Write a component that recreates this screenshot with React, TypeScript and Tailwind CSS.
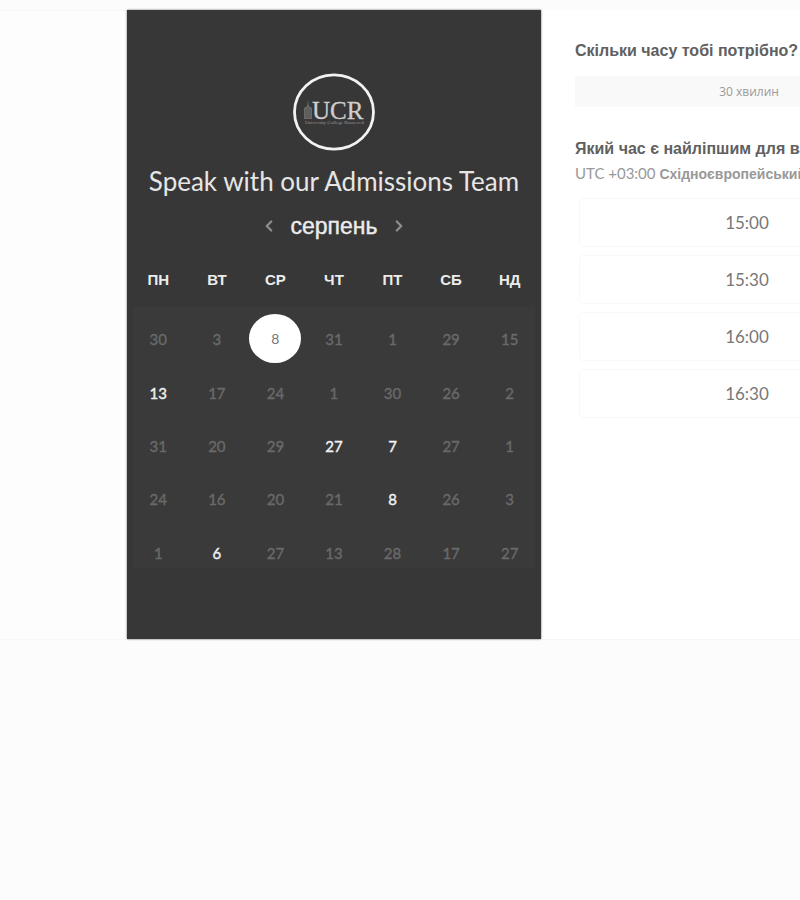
import { ChevronLeft, ChevronRight } from "lucide-react";

const weekdays = ["ПН", "ВТ", "СР", "ЧТ", "ПТ", "СБ", "НД"];

const weeks = [
  [30, 3, 8, 31, 1, 29, 15],
  [13, 17, 24, 1, 30, 26, 2],
  [31, 20, 29, 27, 7, 27, 1],
  [24, 16, 20, 21, 8, 26, 3],
  [1, 6, 27, 13, 28, 17, 27],
];

const selected = "0-2";
const available = ["1-0", "2-3", "2-4", "3-4", "4-1"];
const times = ["15:00", "15:30", "16:00", "16:30"];

function rowHeight(row: number) {
  if (row === 0) return "h-[59px]";
  if (row === weeks.length - 1) return "h-[43px]";
  return "h-[53px]";
}

function cellPadding(row: number) {
  if (row === 0) return "p-0 pt-1 text-center";
  if (row === weeks.length - 1) return "p-0 pt-3 text-center";
  return "p-0 text-center";
}

function Logo() {
  return (
    <svg
      width="82"
      height="78"
      viewBox="0 0 82 78"
      role="img"
      aria-label="UCR University College Roosevelt"
    >
      <ellipse cx="41" cy="39" rx="39.5" ry="37.2" fill="none" stroke="#f2f2f2" strokeWidth="2.8" />
      <path d="M11 46V35l3-2 1-6 1 6 3 2v11z" fill="#696969" />
      <path d="M13 36v9M15 34v11M17 36v9" stroke="#484848" strokeWidth="0.6" />
      <g fontFamily="'Liberation Serif', serif">
        <text x="19" y="46" fontSize="25" fill="#cfcfcf" stroke="#cfcfcf" strokeWidth="0.3">
          UCR
        </text>
        <text x="12" y="51" fontSize="5" fill="#999999">
          University College Roosevelt
        </text>
      </g>
    </svg>
  );
}

function Calendar() {
  return (
    <section className="flex w-[414px] shrink-0 flex-col items-center bg-[#373737] pt-[63px] pb-[71px] shadow-[0_0_2px_rgba(0,0,0,0.6)]">
      <Logo />
      <h1 className="mt-3 font-['Lato',sans-serif] text-[26px] leading-9 whitespace-nowrap text-[#e6e6e6]">
        Speak with our Admissions Team
      </h1>
      <div className="mt-[9px] flex h-9 items-center gap-3 text-[#8e8e8e]">
        <button type="button" aria-label="Попередній місяць">
          <ChevronLeft size={18} strokeWidth={3} />
        </button>
        <h2 className="font-['Liberation_Sans',sans-serif] text-[23px] text-[#ececec] [-webkit-text-stroke:0.4px_#ececec]">
          серпень
        </h2>
        <button type="button" aria-label="Наступний місяць">
          <ChevronRight size={18} strokeWidth={3} />
        </button>
      </div>
      <table className="mt-[11px] w-[410px] table-fixed border-collapse">
        <thead>
          <tr className="h-[52px]">
            {weekdays.map((day) => (
              <th
                key={day}
                scope="col"
                className="p-0 pb-[2px] text-center font-['Liberation_Sans',sans-serif] text-[15px] font-bold text-[#ececec]"
              >
                {day}
              </th>
            ))}
          </tr>
        </thead>
        <tbody className="font-['Lato',sans-serif]">
          {weeks.map((week, row) => (
            <tr
              key={row}
              className={`${rowHeight(row)} bg-[linear-gradient(90deg,#373737_4px,#3a3a3a_4px,#3a3a3a_406px,#373737_406px)]`}
            >
              {week.map((day, column) => {
                const id = `${row}-${column}`;
                if (id === selected) {
                  return (
                    <td key={id} className={cellPadding(row)}>
                      <button
                        type="button"
                        aria-pressed="true"
                        className="h-[49px] w-[52px] rounded-[50%] bg-white align-middle text-sm text-[#777777]"
                      >
                        {day}
                      </button>
                    </td>
                  );
                }
                const open = available.includes(id);
                return (
                  <td key={id} className={cellPadding(row)}>
                    <button
                      type="button"
                      disabled={!open}
                      className={
                        open
                          ? "px-2 text-[15px] text-[#f0f0f0] [-webkit-text-stroke:0.4px_#f0f0f0]"
                          : "px-2 text-[15px] text-[#696969] [-webkit-text-stroke:0.4px_#696969]"
                      }
                    >
                      {day}
                    </button>
                  </td>
                );
              })}
            </tr>
          ))}
        </tbody>
      </table>
    </section>
  );
}

function Booking() {
  return (
    <section className="ml-[34px] w-[344px] shrink-0 pt-[29px] font-['Liberation_Sans',sans-serif] text-[#606060]">
      <h2 className="text-base leading-6 font-bold whitespace-nowrap">Скільки часу тобі потрібно?</h2>
      <button
        type="button"
        className="mt-[13px] block h-[31px] w-full bg-[#f9f9f9] pl-1 font-['Open_Sans',sans-serif] text-xs text-[#999999]"
      >
        30 хвилин
      </button>
      <h2 className="mt-[30px] text-base leading-6 font-bold whitespace-nowrap">
        Який час є найліпшим для вас?
      </h2>
      <p className="text-sm leading-6 whitespace-nowrap text-[#999999]">
        <span className="font-['Lato',sans-serif] text-[15px]">UTC +03:00</span>{" "}
        <span className="font-bold">Східноєвропейський літній час</span>
      </p>
      <div className="mt-3 flex flex-col gap-2 px-1">
        {times.map((time) => (
          <button
            key={time}
            type="button"
            className="h-[49px] rounded-sm border border-[#f8f8f8] bg-white font-['Lato',sans-serif] text-[17px] text-[#777777]"
          >
            {time}
          </button>
        ))}
      </div>
    </section>
  );
}

export default function App() {
  return (
    <main className="min-h-screen overflow-hidden bg-[#fcfcfc] pt-[10px]">
      <div className="flex border-b border-[#f7f7f7] bg-white">
        <div className="w-[127px] shrink-0 border-t border-[#f7f7f7] bg-[#fdfdfd]" />
        <Calendar />
        <Booking />
      </div>
    </main>
  );
}
